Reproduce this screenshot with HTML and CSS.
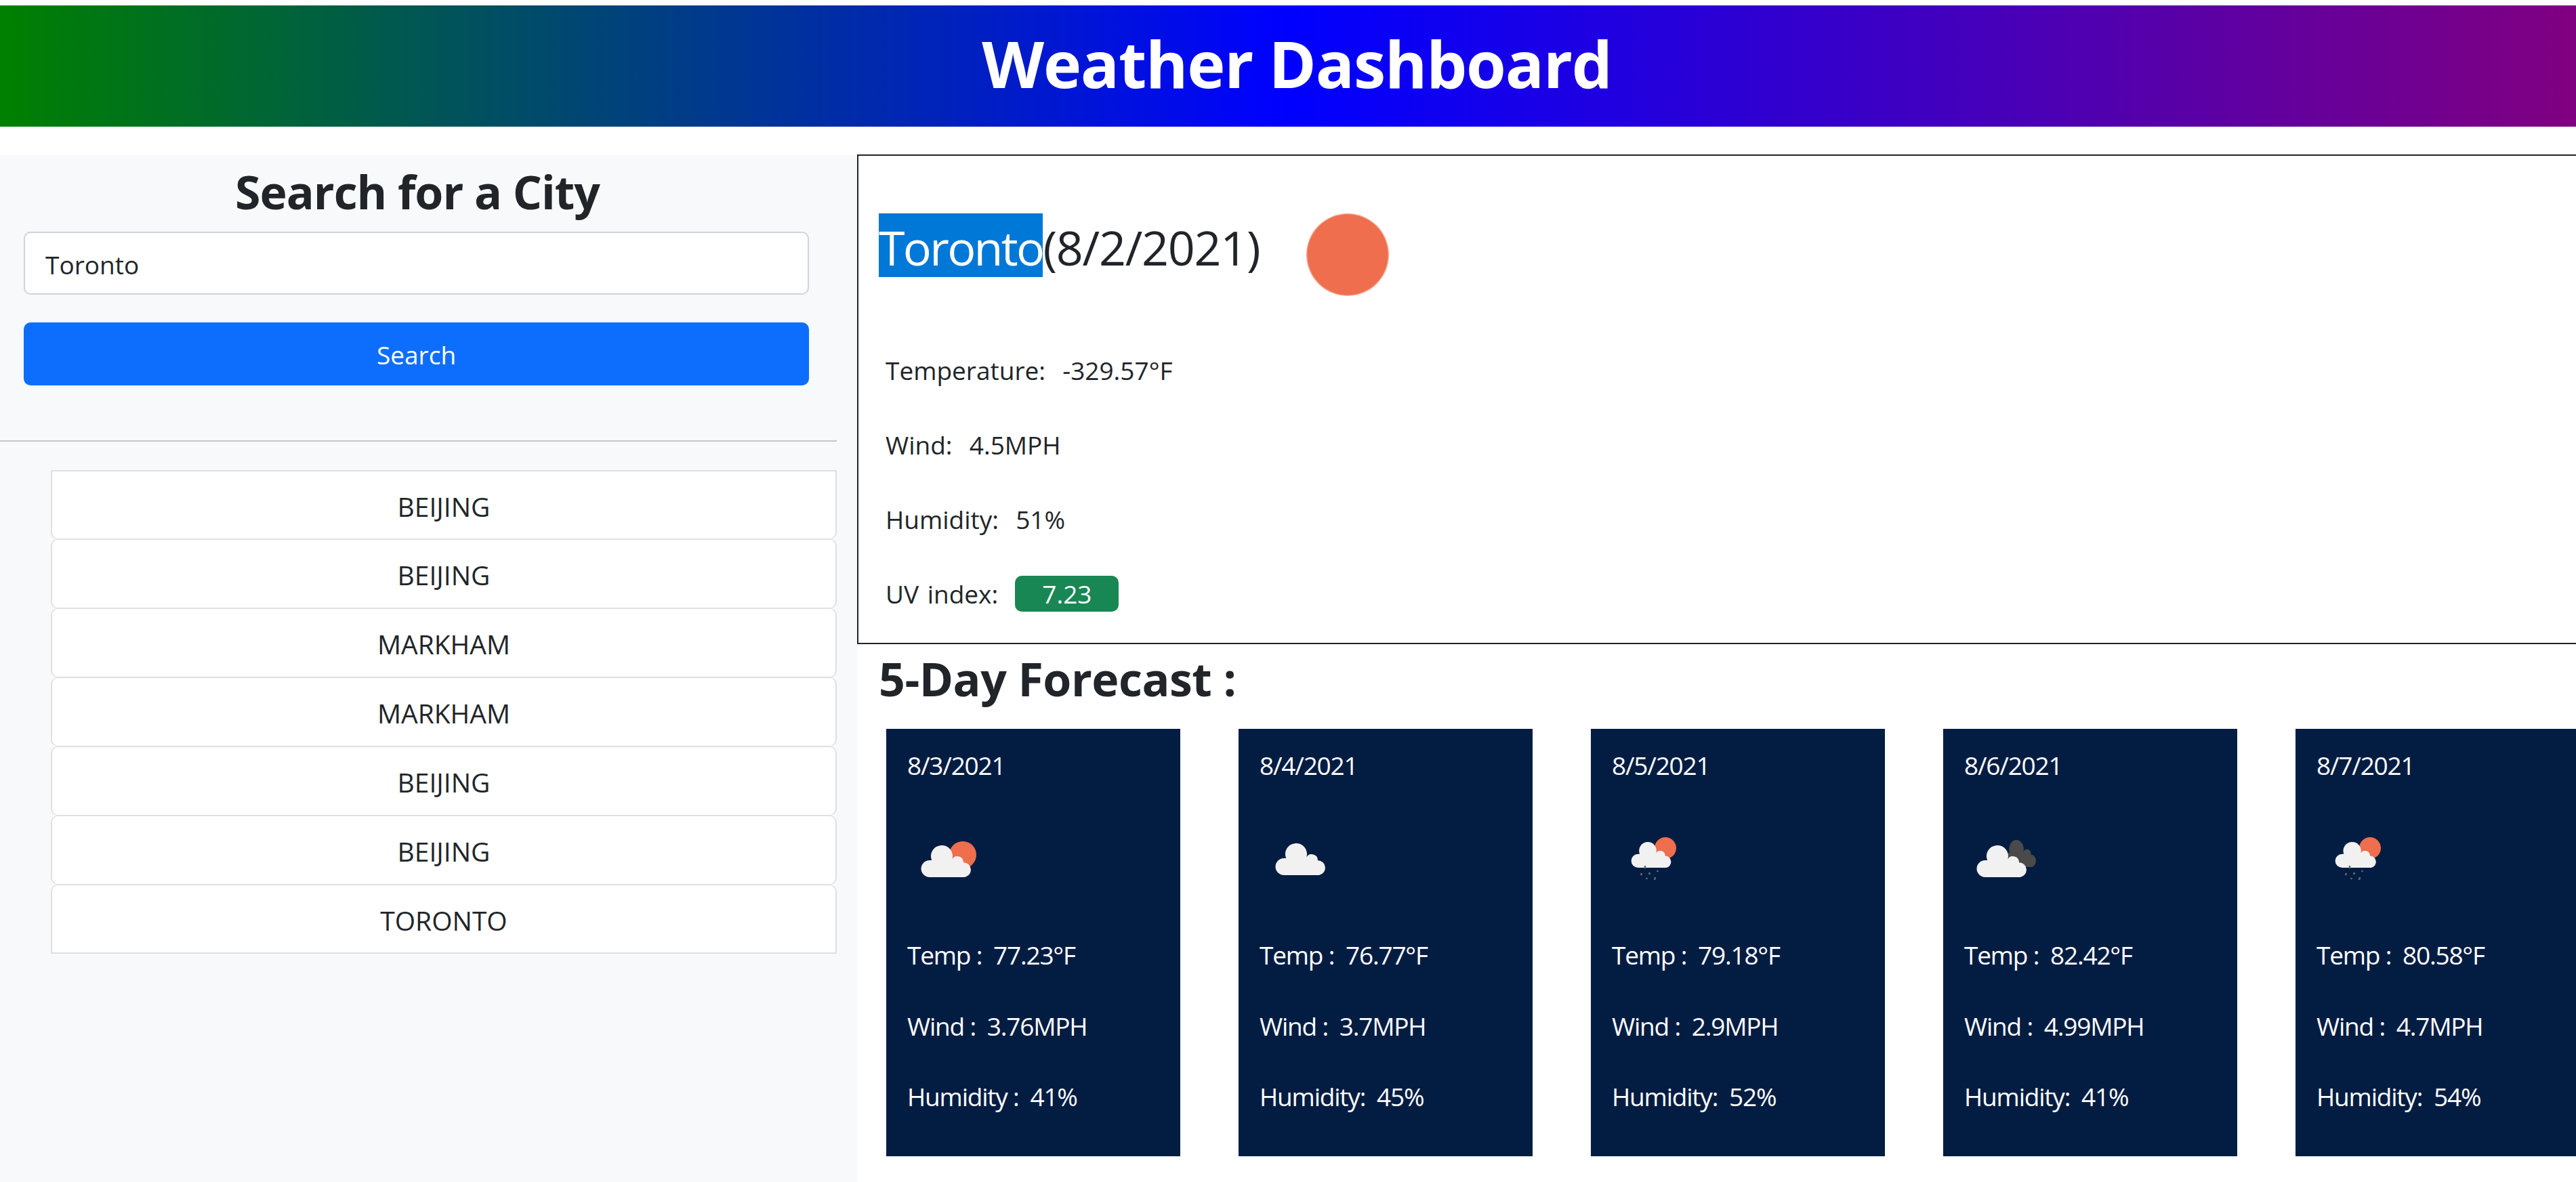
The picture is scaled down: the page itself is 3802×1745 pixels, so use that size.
FILE: index.html
```html
<!DOCTYPE html>
<html lang="en">
<head>
  <meta charset="UTF-8">
  <title>Weather Dashboard</title>
  <link rel="stylesheet" href="styles.css">
</head>
<body>
  <header class="banner">
    <h1>Weather Dashboard</h1>
  </header>

  <div class="page">
    <aside class="sidebar">
      <h2 class="search-title">Search for a City</h2>
      <form class="search-form">
        <input class="search-input" type="text" value="Toronto">
        <button class="search-btn" type="button">Search</button>
      </form>
      <hr class="divider">
      <ul class="history">
        <li>BEIJING</li>
        <li>BEIJING</li>
        <li>MARKHAM</li>
        <li>MARKHAM</li>
        <li>BEIJING</li>
        <li>BEIJING</li>
        <li>TORONTO</li>
      </ul>
    </aside>

    <main class="content">
      <section class="current">
        <div class="current-head">
          <h2 class="current-title"><span class="city">Toronto</span>(8/2/2021)</h2>
          <svg class="current-icon" viewBox="0 0 122 122"><circle cx="61" cy="61" r="61" fill="#f4a48e"/><circle cx="61" cy="61" r="59.5" fill="#ee6e4e"/></svg>
        </div>
        <p class="stat">Temperature:&nbsp;&nbsp;-329.57°F</p>
        <p class="stat">Wind:&nbsp;&nbsp;4.5MPH</p>
        <p class="stat">Humidity:&nbsp;&nbsp;51%</p>
        <p class="stat stat-last">UV index:&nbsp;&nbsp;<span class="uv">7.23</span></p>
      </section>

      <h3 class="forecast-title">5-Day Forecast :</h3>
      <div class="forecast">
        <!-- cloud path is 75 x 47, moved into place with transform -->
        <article class="card">
          <p class="card-date">8/3/2021</p>
          <svg class="card-icon" viewBox="0 0 121 121">
            <circle cx="82" cy="54" r="20" fill="#ee6e4e"/>
            <path transform="translate(21 40)" fill="#f1f1f1" d="M12 47A12.5 12.5 0 0 1 12 22H15.2A16 16 0 1 1 45.3 20.5A9 9 0 0 1 62 25.2A11 11 0 0 1 64 47Z"/>
          </svg>
          <p class="card-line">Temp :&nbsp;&nbsp;77.23°F</p>
          <p class="card-line">Wind :&nbsp;&nbsp;3.76MPH</p>
          <p class="card-line">Humidity :&nbsp;&nbsp;41%</p>
        </article>
        <article class="card">
          <p class="card-date">8/4/2021</p>
          <svg class="card-icon" viewBox="0 0 121 121">
            <path transform="translate(24 37)" fill="#f1f1f1" d="M12 47A12.5 12.5 0 0 1 12 22H15.2A16 16 0 1 1 45.3 20.5A9 9 0 0 1 62 25.2A11 11 0 0 1 64 47Z"/>
          </svg>
          <p class="card-line">Temp :&nbsp;&nbsp;76.77°F</p>
          <p class="card-line">Wind :&nbsp;&nbsp;3.7MPH</p>
          <p class="card-line">Humidity:&nbsp;&nbsp;45%</p>
        </article>
        <article class="card">
          <p class="card-date">8/5/2021</p>
          <svg class="card-icon" viewBox="0 0 121 121">
            <circle cx="79" cy="44" r="16" fill="#ee6e4e"/>
            <path transform="translate(29 35) scale(.8 .81)" fill="#f1f1f1" d="M12 47A12.5 12.5 0 0 1 12 22H15.2A16 16 0 1 1 45.3 20.5A9 9 0 0 1 62 25.2A11 11 0 0 1 64 47Z"/>
            <path stroke="#6a6a6a" stroke-width="2.5" d="M49 70v4M44 81l-1 3M56 80l-1 3M68 77l-1 2M52 88l-1 2M64 87l-1 4"/>
          </svg>
          <p class="card-line">Temp :&nbsp;&nbsp;79.18°F</p>
          <p class="card-line">Wind :&nbsp;&nbsp;2.9MPH</p>
          <p class="card-line">Humidity:&nbsp;&nbsp;52%</p>
        </article>
        <article class="card">
          <p class="card-date">8/6/2021</p>
          <svg class="card-icon" viewBox="0 0 121 121">
            <path transform="translate(57 32) scale(.67 .85)" fill="#4a4a4a" d="M12 47A12.5 12.5 0 0 1 12 22H15.2A16 16 0 1 1 45.3 20.5A9 9 0 0 1 62 25.2A11 11 0 0 1 64 47Z"/>
            <path transform="translate(19 40)" fill="#f1f1f1" d="M12 47A12.5 12.5 0 0 1 12 22H15.2A16 16 0 1 1 45.3 20.5A9 9 0 0 1 62 25.2A11 11 0 0 1 64 47Z"/>
          </svg>
          <p class="card-line">Temp :&nbsp;&nbsp;82.42°F</p>
          <p class="card-line">Wind :&nbsp;&nbsp;4.99MPH</p>
          <p class="card-line">Humidity:&nbsp;&nbsp;41%</p>
        </article>
        <article class="card">
          <p class="card-date">8/7/2021</p>
          <svg class="card-icon" viewBox="0 0 121 121">
            <circle cx="79" cy="44" r="16" fill="#ee6e4e"/>
            <path transform="translate(28 35) scale(.82 .81)" fill="#f1f1f1" d="M12 47A12.5 12.5 0 0 1 12 22H15.2A16 16 0 1 1 45.3 20.5A9 9 0 0 1 62 25.2A11 11 0 0 1 64 47Z"/>
            <path stroke="#6a6a6a" stroke-width="2.5" d="M49 70v4M44 81l-1 3M56 80l-1 3M68 77l-1 2M52 88l-1 2M64 87l-1 4"/>
          </svg>
          <p class="card-line">Temp :&nbsp;&nbsp;80.58°F</p>
          <p class="card-line">Wind :&nbsp;&nbsp;4.7MPH</p>
          <p class="card-line">Humidity:&nbsp;&nbsp;54%</p>
        </article>
      </div>
    </main>
  </div>
</body>
</html>
```

FILE: styles.css
```css
* {
  box-sizing: border-box;
}

html, body {
  height: 100%;
  overflow: hidden;
}

body {
  margin: 0;
  padding-top: 8px;
  background-color: #fff;
  color: #212529;
  font-family: 'Open Sans', 'Noto Sans', sans-serif;
  font-size: 37px;
  line-height: 58px;
}

h1, h2, h3, p, ul {
  margin: 0;
  padding: 0;
}

/* top banner */
.banner {
  height: 179px;
  padding-left: 26px;
  background: linear-gradient(to right, green, blue, purple);
  color: #fff;
  text-align: center;
}

.banner h1 {
  font-size: 95px;
  font-weight: 700;
  letter-spacing: -1.2px;
  line-height: 170px;
}

.page {
  display: flex;
  margin-top: 41px;
  height: 1517px;
}

/* left column */
.sidebar {
  flex: none;
  width: 1265px;
  background-color: #f8f9fa;
}

.search-title {
  padding: 8px 33px 12px 0;
  font-size: 68px;
  font-weight: 700;
  letter-spacing: -1px;
  line-height: 94px;
  text-align: center;
}

.search-form {
  display: flex;
  flex-direction: column;
  gap: 41px;
  padding: 0 71px 0 35px;
}

.search-input {
  height: 93px;
  padding: 3px 30px 0;
  border: 2px solid #ced4da;
  border-radius: 10px;
  background-color: #fff;
  color: #212529;
  font: inherit;
}

.search-btn {
  height: 93px;
  padding-top: 3px;
  border: 0;
  border-radius: 10px;
  background-color: #0d6efd;
  color: #fff;
  font: inherit;
}

.divider {
  width: 1235px;
  height: 2px;
  margin: 81px 0 42px;
  border: 0;
  background-color: #c6c7c9;
}

.history {
  width: 1160px;
  margin-left: 75px;
  list-style: none;
}

.history li {
  height: 102px;
  border: solid #dfe0e1;
  border-width: 1px 2px;
  border-radius: 10px;
  background-color: #fff;
  font-size: 39px;
  line-height: 103px;
  text-align: center;
}

.history li:first-child {
  border-top-width: 2px;
  border-top-left-radius: 0;
  border-top-right-radius: 0;
}

.history li:last-child {
  border-bottom-width: 2px;
  border-bottom-left-radius: 0;
  border-bottom-right-radius: 0;
}

/* right column */
.content {
  flex: none;
  width: 2700px;
}

.current {
  height: 723px;
  padding: 85px 0 0 30px;
  border: 2px solid #212529;
}

.current-head {
  display: flex;
  margin-bottom: 81px;
}

.current-title {
  font-size: 70px;
  font-weight: 400;
  letter-spacing: -1.3px;
  line-height: 94px;
}

.city {
  display: inline-block;
  padding-top: 6px;
  background-color: #0078d7;
  color: #fff;
  letter-spacing: -2.7px;
  line-height: 88px;
}

.current-icon {
  flex: none;
  width: 122px;
  height: 122px;
  margin-left: 69px;
}

.stat {
  margin: 0 0 52px 10px;
  word-spacing: 3px;
}

.stat-last {
  margin-bottom: 0;
}

.uv {
  display: inline-block;
  width: 153px;
  height: 53px;
  border-radius: 10px;
  background-color: #198754;
  color: #fff;
  line-height: 53px;
  text-align: center;
}

.forecast-title {
  padding: 6px 0 2px 32px;
  font-size: 68px;
  font-weight: 700;
  letter-spacing: -0.5px;
  line-height: 90px;
}

.forecast {
  display: flex;
  gap: 86px;
  margin: 27px 0 0 43px;
}

.card {
  flex: none;
  width: 434px;
  padding: 25px 31px 59px;
  background-color: #031d42;
  color: #fff;
  letter-spacing: -1.2px;
}

.card-date {
  margin-bottom: 49px;
}

.card-icon {
  display: block;
  width: 121px;
  height: 121px;
  margin-bottom: 52px;
}

.card-line {
  margin-bottom: 46.5px;
}

.card-line:last-child {
  margin-bottom: 0;
}
```
